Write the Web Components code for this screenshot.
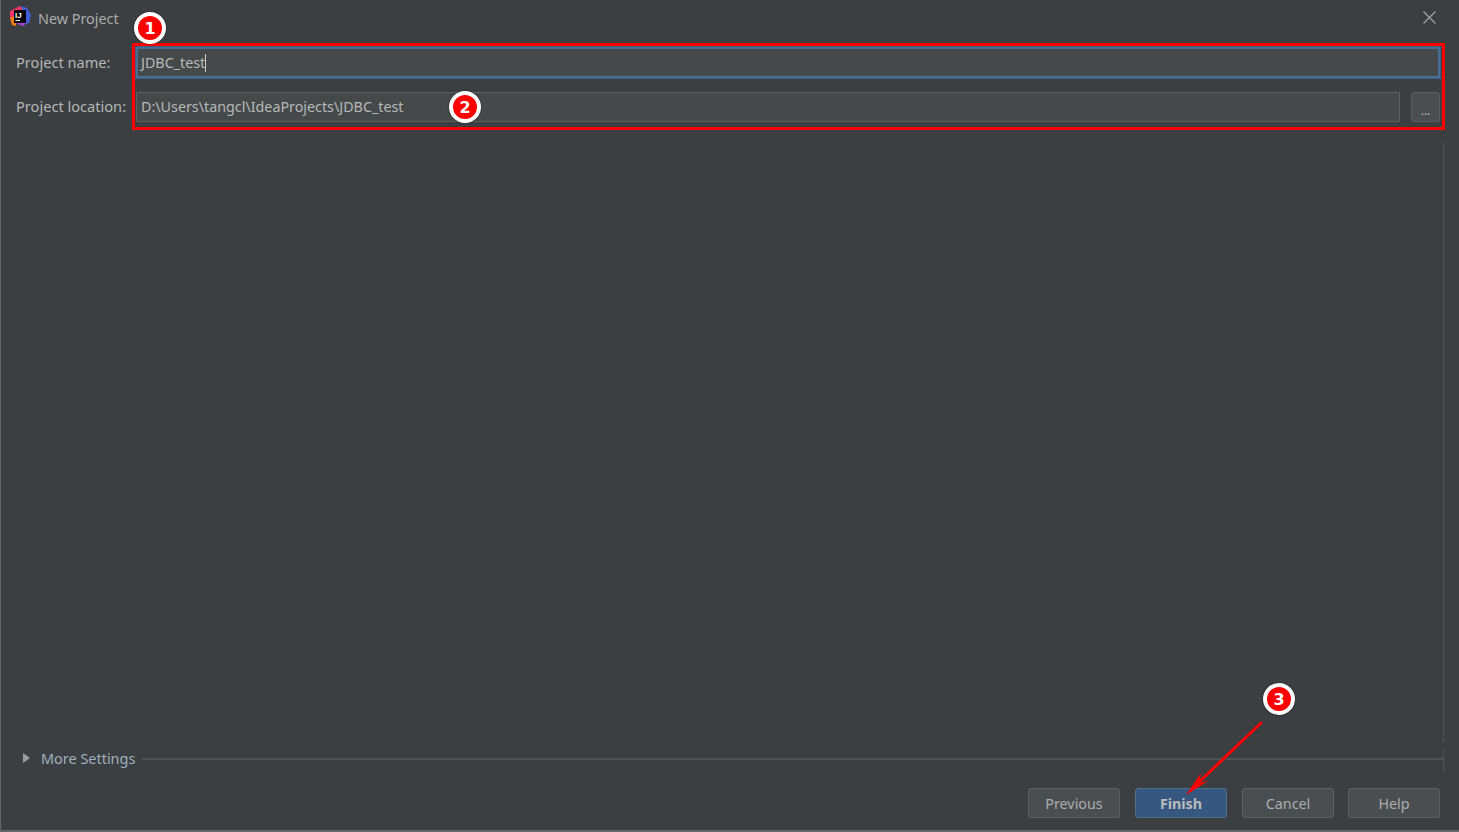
<!DOCTYPE html>
<html>
<head>
<meta charset="utf-8">
<title>New Project</title>
<style>
  html, body { margin: 0; padding: 0; height: 100%; background: #3c3f41; overflow: hidden; }
  body { font-family: "Noto Sans", "Open Sans", sans-serif; font-size: 14px; color: #a9adb0; }
</style>
</head>
<body>
<template id="title-tpl">
  <style>
    :host { display: flex; align-items: center; height: 36px; padding: 0 22px 0 9px; box-sizing: border-box; }
    svg.logo { width: 21px; height: 21px; margin-right: 7px; margin-top: -3px; flex: none; }
    .name { flex: 1; color: #a9adb0; font-size: 14.350px; }
    svg.close { width: 15px; height: 15px; margin-top: -2px; flex: none; }
    text { font: 700 8px "Liberation Sans", sans-serif; fill: #fff; }
  </style>
  <svg class="logo" viewBox="0 0 21 21">
    <path d="M0 5 L10 0 L14 5 L6 13 L0 12 Z" fill="#f0346b"/>
    <path d="M0 12 L6 9 L6 20 L2 19 Z" fill="#f97a12"/>
    <path d="M11 0 L17 2 L21 9 L19 17 L11 20 L14 8 Z" fill="#3f5fdc"/>
    <path d="M5 17 L13 20 L17 16 L8 14 Z" fill="#a83bd0"/>
    <rect x="4" y="4" width="12" height="13" fill="#000"/>
    <text x="5" y="11.500">IJ</text>
    <rect x="5.500" y="14" width="4.500" height="1" fill="#fff"/>
  </svg>
  <span class="name"><slot></slot></span>
  <svg class="close" viewBox="0 0 15 15"><path d="M1.500 1.500 L13.500 13.500 M13.500 1.500 L1.500 13.500" stroke="#a4a7a9" stroke-width="1.200" fill="none"/></svg>
</template>

<template id="field-tpl">
  <style>
    :host { display: flex; align-items: center; height: 30px; padding: 0 19px 0 15px; gap: 10px; }
    :host([focused]) { height: 31px; }
    label { width: 110px; flex: none; white-space: nowrap; color: #b3b6b8; font-size: 14.600px; margin-top: -2px; }
    .input {
      flex: 1; height: 30px; box-sizing: border-box; display: flex; align-items: center;
      background: #45494a; border: 1px solid #5e6060; padding: 0 4px; color: #b6b9bb; font-size: 14.300px; white-space: nowrap;
    }
    .value { margin-top: -2px; }
    :host([focused]) .value { margin-top: 0; }
    :host([focused]) .input { height: 31px; border: 2px solid #466d94; padding: 0 3px; box-shadow: 0 0 0 1px #3d5f80; }
    .caret { width: 1px; height: 18px; background: #c8cacc; display: none; }
    :host([focused]) .caret { display: block; }
    button {
      display: none; flex: none; width: 29px; height: 30px; margin-left: 1px; box-sizing: border-box;
      background: #4b4e50; border: 1px solid #5e6060; border-radius: 3px; color: #b9bcbe;
      font: 12px "Noto Sans", sans-serif; line-height: 1; padding: 8px 0 0;
    }
    :host([browse]) button { display: block; }
  </style>
  <label></label>
  <div class="input"><span class="value"></span><span class="caret"></span></div>
  <button>...</button>
</template>

<template id="settings-tpl">
  <style>
    :host { display: flex; align-items: center; height: 20px; padding: 0 16px 0 22px; color: #9fb0bf; font-size: 14.450px; }
    i { width: 0; height: 0; border-left: 7px solid #9a9d9f; border-top: 5px solid transparent; border-bottom: 5px solid transparent; margin: -3px 11px 0 0; }
    span { white-space: nowrap; margin-top: -2px; }
    hr { flex: 1; height: 2px; margin: 0 0 0 7px; border: 0; background: #505354; }
  </style>
  <i></i><span><slot></slot></span><hr>
</template>

<template id="button-tpl">
  <style>
    :host { display: block; width: 92px; height: 30px; }
    button {
      width: 100%; height: 100%; box-sizing: border-box; border: 1px solid #5e6060; border-radius: 3px;
      background: #4b4e50; color: #a9adb0; font: 14.300px "Noto Sans", sans-serif; padding: 0;
    }
    :host([primary]) button { background: #365880; border-color: #4c708c; color: #bbbbbb; font-weight: 700; }
  </style>
  <button><slot></slot></button>
</template>

<template id="badge-tpl">
  <style>
    :host {
      position: absolute; width: 32px; height: 32px; box-sizing: border-box; border-radius: 50%;
      background: #fe0000; border: 4px solid #fff; color: #fff;
      display: flex; align-items: center; justify-content: center;
      font: 700 16px "DejaVu Sans", sans-serif; box-shadow: 0 0 2px rgba(0,0,0,.5);
    }
  </style>
  <slot></slot>
</template>

<template id="dialog-tpl">
  <style>
    :host {
      display: flex; flex-direction: column; position: relative; width: 1459px; height: 832px; box-sizing: border-box;
      background: #3c3f41; border-left: 1px solid #646667; border-bottom: 2px solid #646667;
    }
    .form { display: flex; flex-direction: column; gap: 14px; padding-top: 11px; }
    .body { flex: 1; position: relative; }
    .rule { position: absolute; right: 15px; top: 21px; bottom: 7px; width: 1px; background: #505354; }
    .rule.low { top: 100%; bottom: auto; height: 24px; }
    .footer { display: flex; justify-content: flex-end; gap: 15px; padding: 19px 19px 12px 0; }
    .marks { position: absolute; left: -1px; top: 0; pointer-events: none; }
  </style>
  <slot name="title"></slot>
  <div class="form"><slot name="field"></slot></div>
  <div class="body"><div class="rule"></div><div class="rule low"></div></div>
  <slot name="settings"></slot>
  <div class="footer"><slot name="button"></slot></div>
  <svg class="marks" width="1459" height="832">
    <rect x="133.500" y="44.500" width="1310" height="84" fill="none" stroke="#fe0000" stroke-width="3"/>
    <path d="M1261 723 L1198 783" stroke="#fe0000" stroke-width="3" stroke-linecap="round" fill="none"/>
    <path d="M1186 795 L1201 773 L1199 783 L1208 781 Z" fill="#fe0000"/>
  </svg>
  <slot name="badge"></slot>
</template>

<idea-dialog>
  <idea-title slot="title">New Project</idea-title>
  <idea-field slot="field" label="Project name:" value="JDBC_test" focused></idea-field>
  <idea-field slot="field" label="Project location:" value="D:\Users\tangcl\IdeaProjects\JDBC_test" browse></idea-field>
  <idea-settings slot="settings">More Settings</idea-settings>
  <idea-button slot="button">Previous</idea-button>
  <idea-button slot="button" primary>Finish</idea-button>
  <idea-button slot="button" style="margin-right:-1px">Cancel</idea-button>
  <idea-button slot="button">Help</idea-button>
  <mark-badge slot="badge" style="left:133px;top:12px">1</mark-badge>
  <mark-badge slot="badge" style="left:448px;top:91px">2</mark-badge>
  <mark-badge slot="badge" style="left:1262px;top:683px">3</mark-badge>
</idea-dialog>

<script>
  class TemplateElement extends HTMLElement {
    constructor(id) {
      super();
      this.attachShadow({ mode: 'open' });
      this.shadowRoot.appendChild(document.getElementById(id).content.cloneNode(true));
    }
  }

  class IdeaDialog extends TemplateElement { constructor() { super('dialog-tpl'); } }
  class IdeaTitle extends TemplateElement { constructor() { super('title-tpl'); } }
  class IdeaSettings extends TemplateElement { constructor() { super('settings-tpl'); } }
  class IdeaButton extends TemplateElement { constructor() { super('button-tpl'); } }
  class MarkBadge extends TemplateElement { constructor() { super('badge-tpl'); } }

  class IdeaField extends TemplateElement {
    constructor() { super('field-tpl'); }
    connectedCallback() {
      this.shadowRoot.querySelector('label').textContent = this.getAttribute('label');
      this.shadowRoot.querySelector('.value').textContent = this.getAttribute('value');
    }
  }

  customElements.define('idea-dialog', IdeaDialog);
  customElements.define('idea-title', IdeaTitle);
  customElements.define('idea-settings', IdeaSettings);
  customElements.define('idea-button', IdeaButton);
  customElements.define('mark-badge', MarkBadge);
  customElements.define('idea-field', IdeaField);
</script>
</body>
</html>
